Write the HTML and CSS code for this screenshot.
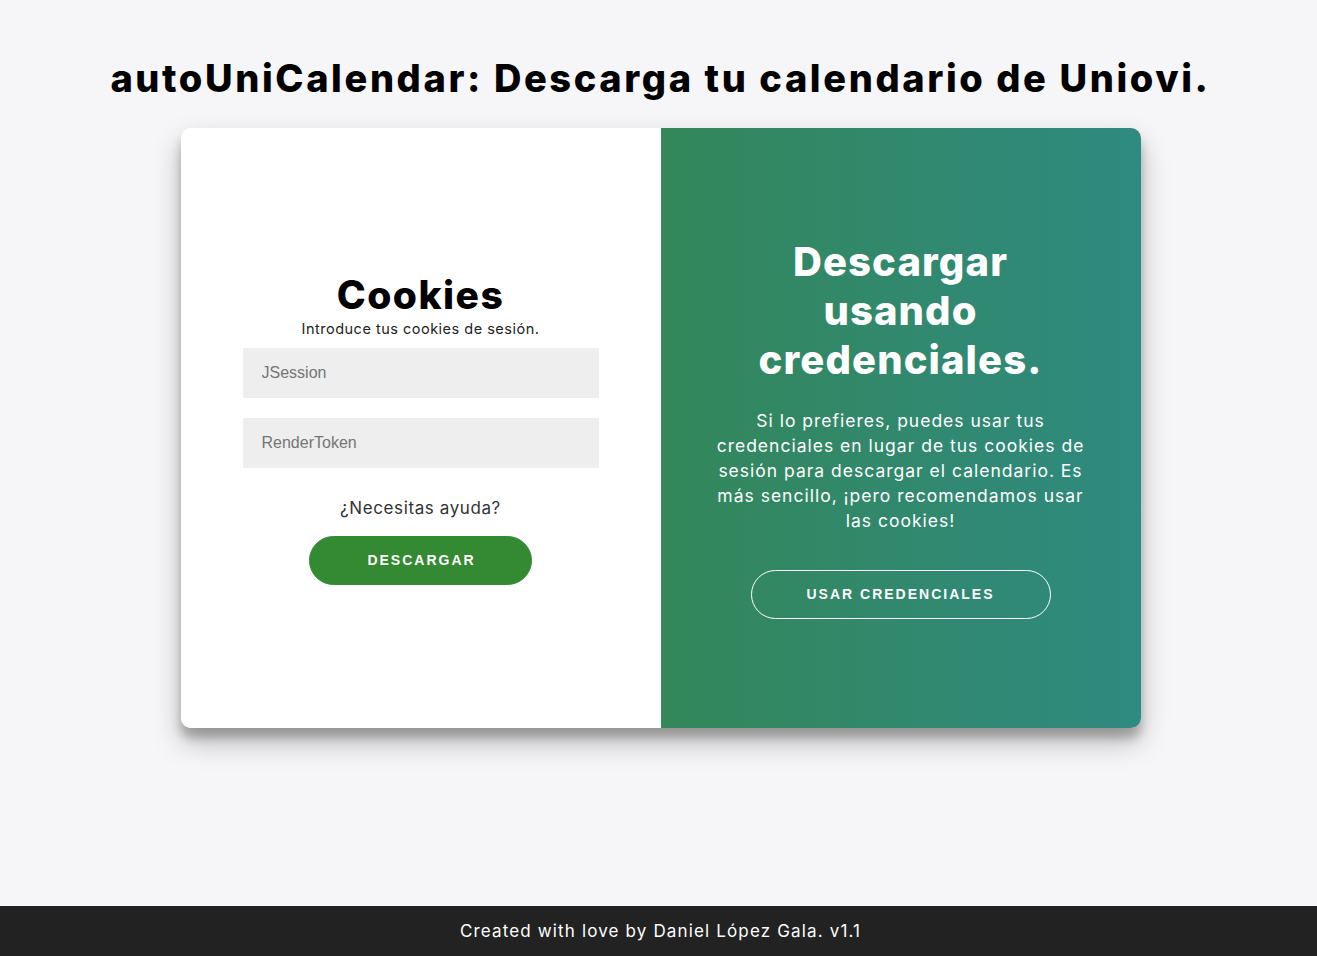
FILE: index.html
```html
<!DOCTYPE html>
<html lang="es">
<head>
<meta charset="utf-8">
<title>autoUniCalendar</title>
<link rel="stylesheet" href="styles.css">
</head>
<body>
<main class="main">
  <h1 class="page-title">autoUniCalendar: Descarga tu calendario de Uniovi.</h1>
  <div class="card">
    <section class="panel panel-form">
      <h1 class="panel-title">Cookies</h1>
      <span class="subtitle">Introduce tus cookies de sesión.</span>
      <input class="field" type="text" placeholder="JSession">
      <input class="field field-second" type="text" placeholder="RenderToken">
      <a class="help" href="#">¿Necesitas ayuda?</a>
      <button class="btn btn-solid">DESCARGAR</button>
    </section>
    <section class="panel panel-overlay">
      <h1 class="overlay-title">Descargar usando credenciales.</h1>
      <p class="overlay-text">Si lo prefieres, puedes usar tus credenciales en lugar de tus cookies de sesión para descargar el calendario. Es más sencillo, ¡pero recomendamos usar las cookies!</p>
      <button class="btn btn-ghost">USAR CREDENCIALES</button>
    </section>
  </div>
</main>
<footer class="footer">
  <p class="footer-text">Created with love by Daniel López Gala. v1.1</p>
</footer>
</body>
</html>
```

FILE: styles.css
```css
* { box-sizing: border-box; }

html, body { height: 100%; }

body {
  margin: 0;
  background: #f6f5f7;
  font-family: "Inter", "Open Sans", sans-serif;
  display: flex;
  flex-direction: column;
  min-height: 100vh;
}

.main {
  flex: 1;
  display: flex;
  flex-direction: column;
  align-items: center;
  padding-left: 4px;
}

.page-title {
  margin: 56px 0 28px;
  font-size: 38px;
  line-height: 44px;
  font-weight: 800;
  color: #000;
  letter-spacing: 2.6px;
}

.card {
  width: 960px;
  height: 600px;
  display: flex;
  border-radius: 10px;
  overflow: hidden;
  background: #fff;
  box-shadow: 0 14px 28px rgba(0,0,0,0.25), 0 10px 10px rgba(0,0,0,0.22);
}

.panel {
  width: 480px;
  height: 100%;
  display: flex;
  flex-direction: column;
  align-items: center;
  justify-content: center;
  text-align: center;
}

.panel-form {
  padding: 3px 62px 0;
  background: #fff;
}

.panel-title {
  margin: 0;
  font-size: 39px;
  line-height: 42px;
  font-weight: 800;
  color: #000;
  letter-spacing: 1.5px;
}

.subtitle {
  font-size: 14.5px;
  line-height: 18px;
  color: #222;
  margin-top: 4px;
  margin-bottom: 10px;
  letter-spacing: 0.5px;
}

.field {
  width: 100%;
  height: 50px;
  border: none;
  background: #eee;
  padding: 0 19px;
  font-family: "Liberation Sans", Arial, sans-serif;
  font-size: 16px;
  color: #333;
  outline: none;
}

.field::placeholder { color: #757575; }

.field-second { margin-top: 20px; }

.help {
  margin-top: 30px;
  font-size: 17px;
  line-height: 20px;
  color: #333;
  text-decoration: none;
  letter-spacing: 0.6px;
}

.btn {
  margin-top: 18px;
  border-radius: 25px;
  padding: 15px 55px 15px 57px;
  font-family: "Liberation Sans", Arial, sans-serif;
  font-size: 14px;
  line-height: 17px;
  font-weight: 700;
  letter-spacing: 2px;
  color: #fff;
  cursor: pointer;
}

.btn-solid {
  background: #348a32;
  border: 1px solid #348a32;
}

.panel-overlay {
  padding: 0 40px;
  background: linear-gradient(to right, #33875a, #2f8a80);
  color: #fff;
}

.overlay-title {
  margin: 0;
  width: 340px;
  font-size: 40px;
  line-height: 49px;
  font-weight: 800;
  letter-spacing: 1.1px;
}

.overlay-text {
  margin: 24px 0 0;
  width: 380px;
  font-size: 17.5px;
  line-height: 25px;
  letter-spacing: 1px;
}

.btn-ghost {
  margin-top: 37px;
  background: transparent;
  border: 1px solid #fff;
  width: 300px;
  padding-left: 0;
  padding-right: 0;
}

.footer {
  height: 50px;
  background: #222;
  display: flex;
  align-items: center;
  justify-content: center;
  padding-left: 4px;
}

.footer-text {
  margin: 0;
  color: #fff;
  font-size: 17px;
  letter-spacing: 1.15px;
}
```
